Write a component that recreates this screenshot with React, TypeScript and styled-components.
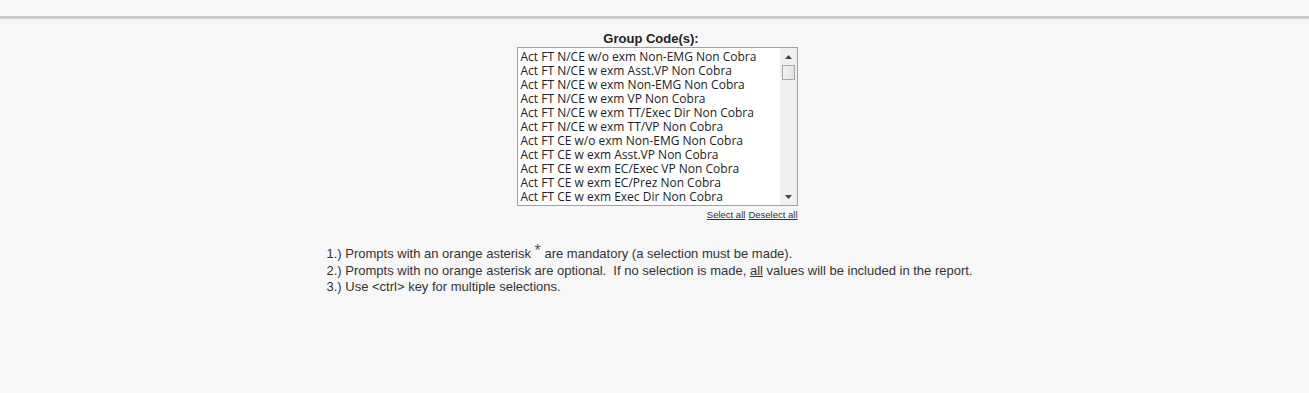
import React from "react";
import styled, { createGlobalStyle } from "styled-components";

const Global = createGlobalStyle`
  html, body { margin: 0; padding: 0; background: #f7f7f7; }
  body { font-family: "Liberation Sans", Arial, sans-serif; color: #333; }
`;

const Page = styled.div`
  width: 1309px;
  height: 393px;
  background: #f7f7f7;
`;

const TopBar = styled.div`
  height: 16px;
  border-bottom: 3px solid #cccccc;
`;

const Content = styled.div`
  width: 656px;
  margin: 0 auto;
  padding-top: 12px;
  display: flex;
  flex-direction: column;
`;

const PromptBlock = styled.div`
  display: flex;
  flex-direction: column;
  align-items: flex-end;
  align-self: flex-start;
  margin-left: 190px;
`;

const Label = styled.div`
  align-self: stretch;
  text-align: center;
  font-weight: bold;
  font-size: 13px;
  line-height: 16px;
  color: #222;
  padding-right: 12px;
`;

const ListBox = styled.div`
  width: 279px;
  height: 157px;
  border: 1px solid #a0a0a0;
  background: #fff;
  display: flex;
  overflow: hidden;
`;

const Options = styled.div`
  flex: 1;
  padding: 2px 0 0 3px;
  display: flex;
  flex-direction: column;
  overflow: hidden;
`;

const Option = styled.div`
  font-family: "Open Sans", "Noto Sans", sans-serif;
  font-size: 12px;
  line-height: 14px;
  height: 14px;
  color: #222;
  white-space: nowrap;
`;

const Scrollbar = styled.div`
  width: 17px;
  background: #f0f0f0;
  display: flex;
  flex-direction: column;
  align-items: center;
`;

const Arrow = styled.div`
  width: 17px;
  height: 17px;
  display: flex;
  align-items: center;
  justify-content: center;
`;

const Thumb = styled.div`
  width: 13px;
  height: 15px;
  border: 1px solid #a8a8a8;
  background: linear-gradient(to right, #f2f2f2, #e2e2e2);
  box-sizing: border-box;
`;

const Track = styled.div`
  flex: 1;
`;

const Links = styled.div`
  margin-top: 3px;
  font-size: 9.5px;
  line-height: 12px;
  display: flex;
  gap: 3px;
`;

const SmallLink = styled.span`
  text-decoration: underline;
  color: #333;
`;

const Notes = styled.div`
  margin-top: 25px;
  font-size: 13px;
  line-height: 16.5px;
  color: #333;
`;

const Star = styled.sup`
  font-size: 16px;
  line-height: 0;
  vertical-align: 2px;
  color: #555;
`;

const U = styled.span`
  text-decoration: underline;
`;

const items = [
  "Act FT N/CE w/o exm Non-EMG Non Cobra",
  "Act FT N/CE w exm Asst.VP Non Cobra",
  "Act FT N/CE w exm Non-EMG Non Cobra",
  "Act FT N/CE w exm VP Non Cobra",
  "Act FT N/CE w exm TT/Exec Dir Non Cobra",
  "Act FT N/CE w exm TT/VP Non Cobra",
  "Act FT CE w/o exm Non-EMG Non Cobra",
  "Act FT CE w exm Asst.VP Non Cobra",
  "Act FT CE w exm EC/Exec VP Non Cobra",
  "Act FT CE w exm EC/Prez Non Cobra",
  "Act FT CE w exm Exec Dir Non Cobra",
];

export default function App() {
  return (
    <Page>
      <Global />
      <TopBar />
      <Content>
        <PromptBlock>
          <Label>Group Code(s):</Label>
          <ListBox>
            <Options>
              {items.map((t) => (
                <Option key={t}>{t}</Option>
              ))}
            </Options>
            <Scrollbar>
              <Arrow>
                <svg width="7" height="4" viewBox="0 0 7 4">
                  <path d="M0 4 L3.5 0 L7 4 Z" fill="#444" />
                </svg>
              </Arrow>
              <Thumb />
              <Track />
              <Arrow>
                <svg width="7" height="4" viewBox="0 0 7 4">
                  <path d="M0 0 L3.5 4 L7 0 Z" fill="#444" />
                </svg>
              </Arrow>
            </Scrollbar>
          </ListBox>
          <Links>
            <SmallLink>Select all</SmallLink>
            <SmallLink>Deselect all</SmallLink>
          </Links>
        </PromptBlock>
        <Notes>
          <div>
            1.) Prompts with an orange asterisk <Star>*</Star> are mandatory (a selection must be made).
          </div>
          <div>
            2.) Prompts with no orange asterisk are optional.&nbsp; If no selection is made, <U>all</U> values will be included in the report.
          </div>
          <div>3.) Use &lt;ctrl&gt; key for multiple selections.</div>
        </Notes>
      </Content>
    </Page>
  );
}
